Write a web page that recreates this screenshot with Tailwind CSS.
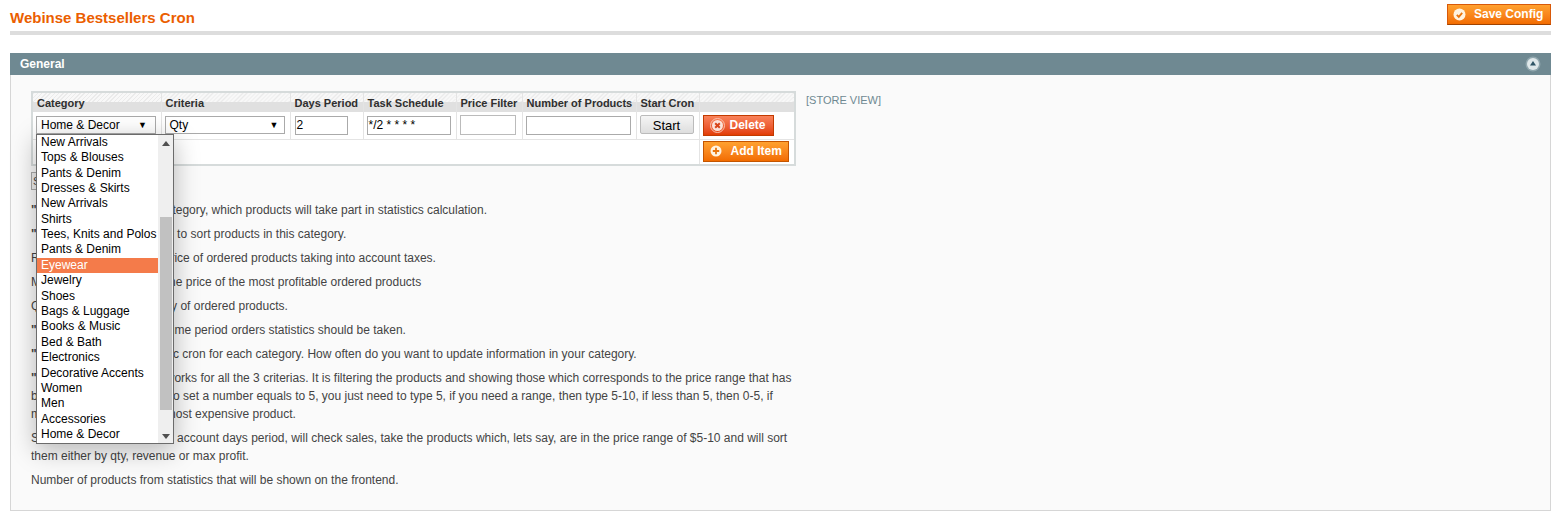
<!DOCTYPE html>
<html lang="en">
<head>
  <meta charset="UTF-8">
  <title>Webinse Bestsellers Cron</title>
  <script src="https://cdn.jsdelivr.net/npm/@tailwindcss/browser@4"></script>
</head>
<body class="bg-white font-['Liberation_Sans',Arial,sans-serif] text-[12px] text-[#444] overflow-hidden">
  <div class="relative w-[1557px] h-[522px] pl-[10px] pr-[6px]">
    <!-- Page header -->
    <div class="h-[35px] pt-[4px] flex justify-between items-start border-b-[4px] border-[#dddddd] box-border">
      <h3 class="mt-[5px] text-[15px] leading-[18px] font-bold text-[#eb5e00]">Webinse Bestsellers Cron</h3>
      <button class="h-[21px] w-[104px] flex items-center gap-[8px] pl-[5px] pb-[1px] border border-[#d85909] border-b-[#a04300] bg-gradient-to-b from-[#ffa12f] to-[#f26c00] text-white font-bold text-[12px]">
        <svg class="w-[13px] h-[13px]" viewBox="0 0 13 13"><circle cx="6.5" cy="6.5" r="6" fill="#fff3e0"/><path d="M3.8 6.8l2 2 3.4-4" fill="none" stroke="#e8740c" stroke-width="1.8"/></svg>
        <span>Save Config</span>
      </button>
    </div>

    <!-- Section bar -->
    <div class="mt-[18px] h-[22px] bg-[#6f8992] flex items-center justify-between pl-[10px] pr-[10px] text-white font-bold">
      <span>General</span>
      <svg class="w-[16px] h-[16px]" viewBox="0 0 16 16"><circle cx="8" cy="8" r="7.5" fill="#8fa6ad"/><circle cx="8" cy="8" r="6" fill="#dfe8ea"/><path d="M8 5l3 4.500H5z" fill="#2f5566"/></svg>
    </div>

    <!-- Section body -->
    <div class="h-[436px] border border-t-0 border-[#d6d6d6] bg-[#fafafa] pt-[16px] pl-[20px] box-border">
      <div class="flex items-start">
        <table class="table-fixed w-[765px] h-[75px] border-2 border-[#d6dbdb] border-collapse bg-white text-[#2f2f2f]">
          <colgroup>
            <col class="w-[129px]"><col class="w-[129px]"><col class="w-[73px]"><col class="w-[93px]"><col class="w-[66px]"><col class="w-[114px]"><col class="w-[63px]"><col>
          </colgroup>
          <thead>
            <tr class="h-[20px] text-[11px] font-bold text-left whitespace-nowrap">
              <th class="px-[4px] pt-[2px] pb-0 border-r border-[#e4e4e4] bg-[linear-gradient(#0000_50%,#e0e0e0_50%),repeating-linear-gradient(135deg,#ebebeb_0_1px,#f8f8f8_1px_3px)]">Category</th>
              <th class="px-[4px] pt-[2px] pb-0 border-r border-[#e4e4e4] bg-[linear-gradient(#0000_50%,#e0e0e0_50%),repeating-linear-gradient(135deg,#ebebeb_0_1px,#f8f8f8_1px_3px)]">Criteria</th>
              <th class="px-[4px] pt-[2px] pb-0 border-r border-[#e4e4e4] bg-[linear-gradient(#0000_50%,#e0e0e0_50%),repeating-linear-gradient(135deg,#ebebeb_0_1px,#f8f8f8_1px_3px)]">Days Period</th>
              <th class="px-[4px] pt-[2px] pb-0 border-r border-[#e4e4e4] bg-[linear-gradient(#0000_50%,#e0e0e0_50%),repeating-linear-gradient(135deg,#ebebeb_0_1px,#f8f8f8_1px_3px)]">Task Schedule</th>
              <th class="px-[4px] pt-[2px] pb-0 border-r border-[#e4e4e4] bg-[linear-gradient(#0000_50%,#e0e0e0_50%),repeating-linear-gradient(135deg,#ebebeb_0_1px,#f8f8f8_1px_3px)]">Price Filter</th>
              <th class="px-[4px] pt-[2px] pb-0 border-r border-[#e4e4e4] bg-[linear-gradient(#0000_50%,#e0e0e0_50%),repeating-linear-gradient(135deg,#ebebeb_0_1px,#f8f8f8_1px_3px)]">Number of Products</th>
              <th class="px-[4px] pt-[2px] pb-0 border-r border-[#e4e4e4] bg-[linear-gradient(#0000_50%,#e0e0e0_50%),repeating-linear-gradient(135deg,#ebebeb_0_1px,#f8f8f8_1px_3px)]">Start Cron</th>
              <th class="py-0 bg-[linear-gradient(#0000_50%,#e0e0e0_50%),repeating-linear-gradient(135deg,#ebebeb_0_1px,#f8f8f8_1px_3px)]"></th>
            </tr>
          </thead>
          <tbody>
            <tr class="h-[26px] border-b border-[#e4e4e4] text-black">
              <td class="px-[3px] py-0 border-r border-[#e4e4e4]">
                <div class="h-[18px] w-[120px] border border-[#aaa] flex items-center justify-between pl-[4px] pr-[8px]"><span>Home &amp; Decor</span><span class="text-[9px]">▼</span></div>
              </td>
              <td class="px-[3px] py-0 border-r border-[#e4e4e4]">
                <div class="h-[18px] w-[120px] border border-[#aaa] flex items-center justify-between pl-[4px] pr-[5px]"><span>Qty</span><span class="text-[9px]">▼</span></div>
              </td>
              <td class="px-[4px] py-0 border-r border-[#e4e4e4]"><div class="h-[19px] w-[53px] border border-[#aaa] pl-[1px] leading-[17px] text-[12px]">2</div></td>
              <td class="px-[3px] py-0 border-r border-[#e4e4e4]"><div class="h-[19px] w-[84px] border border-[#aaa] pl-[1px] leading-[17px]">*/2 * * * *</div></td>
              <td class="px-[3px] py-0 border-r border-[#e4e4e4]"><div class="h-[20px] w-[56px] border border-[#bbb]"></div></td>
              <td class="px-[3px] py-0 border-r border-[#e4e4e4]"><div class="h-[19px] w-[105px] border border-[#aaa]"></div></td>
              <td class="px-[3px] py-0 border-r border-[#e4e4e4]"><button class="h-[19px] w-[54px] rounded-[2px] border border-[#bbb] bg-gradient-to-b from-[#f5f5f5] to-[#dedede] text-[13px]">Start</button></td>
              <td class="px-[3px] py-0">
                <button class="h-[21px] w-[71px] flex items-center gap-[5px] pl-[6px] border border-[#c23a00] bg-gradient-to-b from-[#f9825a] to-[#e23c00] text-white font-bold">
                  <svg class="w-[15px] h-[15px]" viewBox="0 0 15 15"><circle cx="7.500" cy="7.500" r="7" fill="none" stroke="#fbc3ae" stroke-width="1"/><circle cx="7.500" cy="7.500" r="5.500" fill="#fbe3da"/><path d="M5.200 5.200l4.600 4.600M9.800 5.200l-4.600 4.600" stroke="#d8451a" stroke-width="2"/></svg>
                  <span>Delete</span>
                </button>
              </td>
            </tr>
            <tr class="h-[25px]">
              <td colspan="7" class="border-r border-[#e4e4e4]"></td>
              <td class="px-[3px] py-0">
                <button class="h-[21px] w-[86px] flex items-center gap-[9px] pl-[6px] pb-[1px] border border-[#c45500] bg-gradient-to-b from-[#ffa12f] to-[#f26c00] text-white font-bold">
                  <svg class="w-[12px] h-[12px]" viewBox="0 0 12 12"><circle cx="6" cy="6" r="5.500" fill="#fff3e0"/><path d="M6 2.800v6.400M2.800 6h6.400" stroke="#e8740c" stroke-width="1.800"/></svg>
                  <span>Add Item</span>
                </button>
              </td>
            </tr>
          </tbody>
        </table>
        <span class="ml-[10px] mt-[1px] text-[11px] text-[#6f8992]">[STORE VIEW]</span>
      </div>

      <!-- Help text -->
      <div class="mt-[6px] h-[18px] w-[40px] border border-[#aaa] bg-[#eee] text-[11px] pl-[1px]">Show</div>
      <div class="mt-[11px] w-[765px] leading-[18px] flex flex-col gap-[6px]">
        <p><b>"Category"</b> - select the category, which products will take part in statistics calculation.</p>
        <p><b>"Criteria"</b> &ndash; select the way to sort products in this category.</p>
        <p>Revenue - this takes the price of ordered products taking into account taxes.</p>
        <p>Max profit - will take only the price of the most profitable ordered products</p>
        <p>Quantity - uses the quantity of ordered products.</p>
        <p><b>"Days Period"</b> - for what time period orders statistics should be taken.</p>
        <p><b>"Task Schedule"</b> &ndash; specific cron for each category. How often do you want to update information in your category.</p>
        <p><b>"Price Filter"</b> &ndash; this filter works for all the 3 criterias. It is filtering the products and showing those which corresponds to the price range that has been given. For example, to set a number equals to 5, you just need to type 5, if you need a range, then type 5-10, if less than 5, then 0-5, if more than 5, then 5 - the most expensive product.</p>
        <p>So then the cron takes into account days period, will check sales, take the products which, lets say, are in the price range of $5-10 and will sort them either by qty, revenue or max profit.</p>
        <p>Number of products from statistics that will be shown on the frontend.</p>
      </div>
    </div>

    <!-- Open select dropdown -->
    <div class="absolute left-[36px] top-[134px] w-[138px] h-[310px] border border-[#6b6b6b] bg-white text-black flex shadow-[0_6px_24px_rgba(0,0,0,0.28)]">
      <ul class="w-[121px] leading-[15px]">
        <li class="pl-[4px] h-[15px]">New Arrivals</li>
        <li class="pl-[4px] h-[16px]">Tops &amp; Blouses</li>
        <li class="pl-[4px] h-[15px]">Pants &amp; Denim</li>
        <li class="pl-[4px] h-[15px]">Dresses &amp; Skirts</li>
        <li class="pl-[4px] h-[16px]">New Arrivals</li>
        <li class="pl-[4px] h-[15px]">Shirts</li>
        <li class="pl-[4px] h-[15px]">Tees, Knits and Polos</li>
        <li class="pl-[4px] h-[16px]">Pants &amp; Denim</li>
        <li class="pl-[4px] h-[15px] bg-[#f47b4a] text-white">Eyewear</li>
        <li class="pl-[4px] h-[16px]">Jewelry</li>
        <li class="pl-[4px] h-[15px]">Shoes</li>
        <li class="pl-[4px] h-[15px]">Bags &amp; Luggage</li>
        <li class="pl-[4px] h-[16px]">Books &amp; Music</li>
        <li class="pl-[4px] h-[15px]">Bed &amp; Bath</li>
        <li class="pl-[4px] h-[16px]">Electronics</li>
        <li class="pl-[4px] h-[15px]">Decorative Accents</li>
        <li class="pl-[4px] h-[15px]">Women</li>
        <li class="pl-[4px] h-[16px]">Men</li>
        <li class="pl-[4px] h-[15px]">Accessories</li>
        <li class="pl-[4px] h-[15px]">Home &amp; Decor</li>
      </ul>
      <div class="w-[15px] bg-[#efefef] flex flex-col items-center">
        <svg class="w-[8px] h-[5px] mt-[6px]" viewBox="0 0 8 5"><path d="M4 0l4 5H0z" fill="#505050"/></svg>
        <div class="w-[12px] h-[193px] mt-[71px] bg-[#c1c1c1]"></div>
        <svg class="w-[8px] h-[5px] mt-[24px]" viewBox="0 0 8 5"><path d="M0 0h8L4 5z" fill="#505050"/></svg>
      </div>
    </div>
  </div>
</body>
</html>
